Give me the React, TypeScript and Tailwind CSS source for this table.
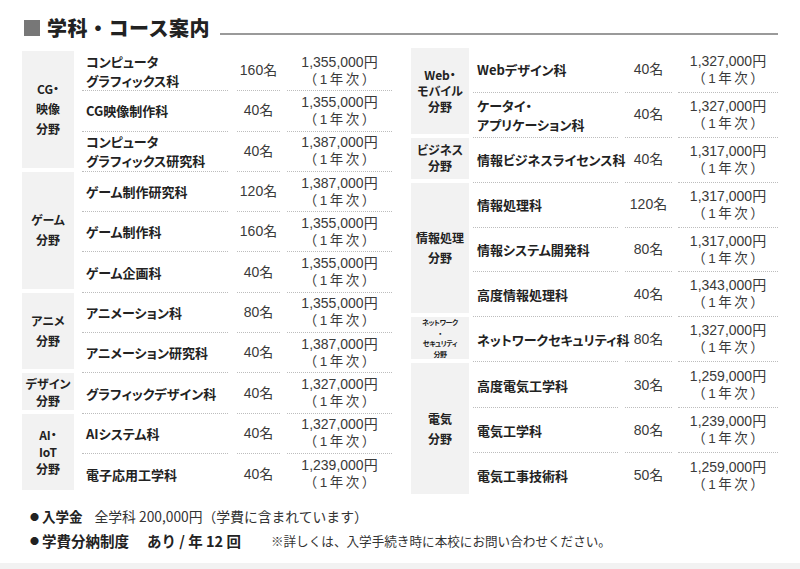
import React from "react";

interface Course {
    name: string[];
    cap: string;
    price: string;
}

interface Group {
    cat: React.ReactNode;
    rows: Course[];
}

const leftGroups: Group[] = [
    {
        cat: <div className="leading-[20px]">CG・<br />映像<br />分野</div>,
        rows: [
            { name: ["コンピュータ", "グラフィックス科"], cap: "160名", price: "1,355,000円" },
            { name: ["CG映像制作科"], cap: "40名", price: "1,355,000円" },
            { name: ["コンピュータ", "グラフィックス研究科"], cap: "40名", price: "1,387,000円" },
        ],
    },
    {
        cat: <div className="leading-[20px]">ゲーム<br />分野</div>,
        rows: [
            { name: ["ゲーム制作研究科"], cap: "120名", price: "1,387,000円" },
            { name: ["ゲーム制作科"], cap: "160名", price: "1,355,000円" },
            { name: ["ゲーム企画科"], cap: "40名", price: "1,355,000円" },
        ],
    },
    {
        cat: <div className="leading-[20px]">アニメ<br />分野</div>,
        rows: [
            { name: ["アニメーション科"], cap: "80名", price: "1,355,000円" },
            { name: ["アニメーション研究科"], cap: "40名", price: "1,387,000円" },
        ],
    },
    {
        cat: <div className="leading-[17px]">デザイン<br />分野</div>,
        rows: [{ name: ["グラフィックデザイン科"], cap: "40名", price: "1,327,000円" }],
    },
    {
        cat: <div className="leading-[17px]">AI・<br />IoT<br />分野</div>,
        rows: [
            { name: ["AIシステム科"], cap: "40名", price: "1,327,000円" },
            { name: ["電子応用工学科"], cap: "40名", price: "1,239,000円" },
        ],
    },
];

const rightGroups: Group[] = [
    {
        cat: <div className="leading-[16px]">Web・<br />モバイル<br />分野</div>,
        rows: [
            { name: ["Webデザイン科"], cap: "40名", price: "1,327,000円" },
            { name: ["ケータイ・", "アプリケーション科"], cap: "40名", price: "1,327,000円" },
        ],
    },
    {
        cat: <div className="leading-[16px]">ビジネス<br />分野</div>,
        rows: [{ name: ["情報ビジネスライセンス科"], cap: "40名", price: "1,317,000円" }],
    },
    {
        cat: <div className="leading-[20px]">情報処理<br />分野</div>,
        rows: [
            { name: ["情報処理科"], cap: "120名", price: "1,317,000円" },
            { name: ["情報システム開発科"], cap: "80名", price: "1,317,000円" },
            { name: ["高度情報処理科"], cap: "40名", price: "1,343,000円" },
        ],
    },
    {
        cat: (
            <div className="flex flex-col items-center text-[7px] tracking-[-0.4px]">
                <span className="h-[10.5px] leading-[10.5px]">ネットワーク</span>
                <span className="h-[10.5px] leading-[10.5px]">・</span>
                <span className="h-[10.5px] leading-[10.5px]">セキュリティ</span>
                <span className="h-[10.5px] leading-[10.5px]">分野</span>
            </div>
        ),
        rows: [{ name: ["ネットワークセキュリティ科"], cap: "80名", price: "1,327,000円" }],
    },
    {
        cat: <div className="leading-[20px]">電気<br />分野</div>,
        rows: [
            { name: ["高度電気工学科"], cap: "30名", price: "1,259,000円" },
            { name: ["電気工学科"], cap: "80名", price: "1,239,000円" },
            { name: ["電気工事技術科"], cap: "50名", price: "1,259,000円" },
        ],
    },
];

interface TableProps {
    groups: Group[];
    side: "left" | "right";
}

const numFont = { fontFamily: '"Liberation Sans", "Noto Sans CJK JP", sans-serif' };

function CourseTable({ groups, side }: TableProps) {
    const isLeft = side === "left";
    const rowH = isLeft ? "h-[40.3px]" : "h-[44.9px]";
    const catW = isLeft ? "w-[52px] mr-[8px]" : "w-[58px] mr-[4px]";
    const nameW = isLeft ? "w-[146px] mr-[9px]" : "w-[145px] mr-[7px]";
    const capW = isLeft ? "w-[43px] mr-[7px]" : "w-[47px] mr-[6px]";
    const priceW = isLeft ? "w-[105px]" : "w-[100px]";

    return (
        <div className="flex flex-col">
            {groups.map((g, gi) => (
                <div key={gi} className="flex">
                    <div
                        className={`${catW} mb-[4px] shrink-0 bg-[#f2f2f2] flex items-center justify-center text-center text-[12px] font-bold text-[#222]`}
                    >
                        {g.cat}
                    </div>
                    <div className="flex flex-col">
                        {g.rows.map((r, ri) => {
                            const last = gi === groups.length - 1 && ri === g.rows.length - 1;
                            const line = last ? "" : "border-b border-dotted border-[#bdbdbd]";
                            return (
                                <div key={ri} className={`flex ${rowH}`}>
                                    <div
                                        className={`${nameW} ${line} pl-[4px] flex flex-col justify-center text-[13px] font-bold leading-[19px] text-[#222] whitespace-nowrap`}
                                    >
                                        {r.name.map((n, ni) => (
                                            <span key={ni}>{n}</span>
                                        ))}
                                    </div>
                                    <div
                                        className={`${capW} ${line} flex items-center justify-center text-[14px] text-[#3a3a3a]`}
                                        style={numFont}
                                    >
                                        {r.cap}
                                    </div>
                                    <div
                                        className={`${priceW} ${line} flex flex-col items-center justify-center text-[14px] leading-[18px] text-[#3a3a3a] [font-feature-settings:normal]`}
                                        style={numFont}
                                    >
                                        <span>{r.price}</span>
                                        <span className="text-[13.5px] tracking-[2.5px] pl-[2.5px]">（1年次）</span>
                                    </div>
                                </div>
                            );
                        })}
                    </div>
                </div>
            ))}
        </div>
    );
}

export default function App() {
    return (
        <div
            className="w-[800px] h-[569px] overflow-hidden bg-white text-[#222] flex flex-col [font-feature-settings:'palt']"
            style={{ fontFamily: '"Noto Sans CJK JP", "Noto Sans", sans-serif' }}
        >
            {/* heading */}
            <div className="flex items-center pl-[24px] pr-[22px] pt-[11px] h-[45px]">
                <div className="w-[16px] h-[16px] bg-[#777] shrink-0" />
                <h2 className="ml-[7px] text-[20px] font-black leading-[24px] tracking-[0.5px] whitespace-nowrap [font-feature-settings:normal]">
                    学科・コース案内
                </h2>
                <div className="flex-1 h-[1.5px] bg-[#9a9a9a] ml-[10px] mt-[12px]" />
            </div>

            {/* tables */}
            <div className="flex items-start pl-[22px]">
                <div className="w-[370px] mt-[6px]">
                    <CourseTable groups={leftGroups} side="left" />
                </div>
                <div className="w-[367px] ml-[19px] mt-[3px]">
                    <CourseTable groups={rightGroups} side="right" />
                </div>
            </div>

            {/* notes */}
            <div className="pl-[30px] mt-[9px] flex flex-col gap-[5px] leading-[19px] text-[#222] whitespace-nowrap [font-feature-settings:normal]">
                <div className="flex items-center">
                    <span className="text-[9px] mr-[3px]">●</span>
                    <span className="font-bold text-[13.5px]">入学金</span>
                    <span className="ml-[12px] text-[13.8px] text-[#333]">全学科 200,000円（学費に含まれています）</span>
                </div>
                <div className="flex items-center">
                    <span className="text-[9px] mr-[3px]">●</span>
                    <span className="font-bold text-[14.5px]">学費分納制度</span>
                    <span className="font-bold text-[14.5px] ml-[18px]">あり / 年 12 回</span>
                    <span className="ml-[30px] text-[12.6px] text-[#333]">※詳しくは、入学手続き時に本校にお問い合わせください。</span>
                </div>
            </div>

            <div className="flex-1" />
            <div className="h-[6px] bg-[#f2f2f2]" />
        </div>
    );
}
